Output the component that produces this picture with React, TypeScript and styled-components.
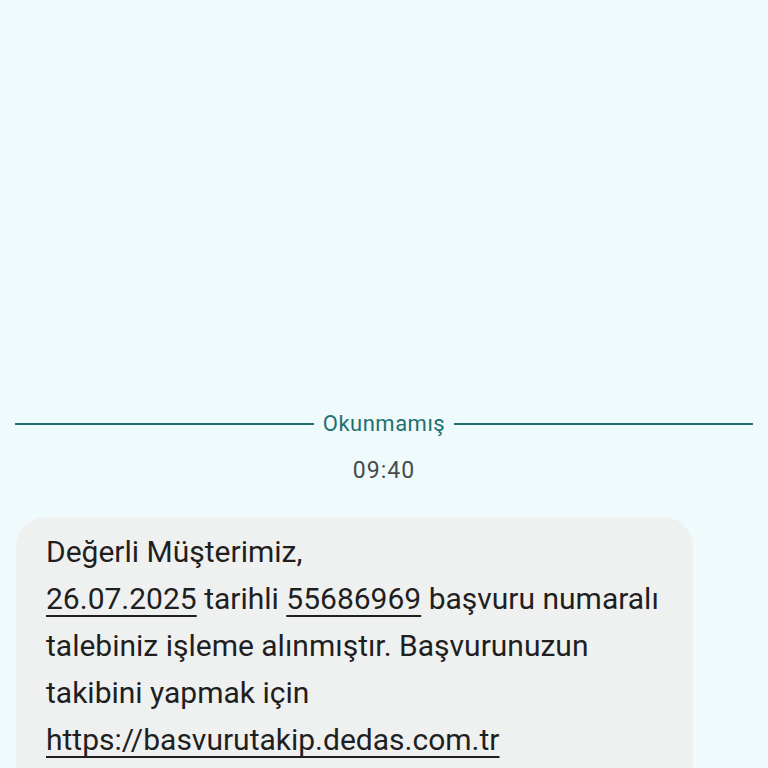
import React from 'react';
import styled, { createGlobalStyle } from 'styled-components';

const GlobalStyle = createGlobalStyle`
  html, body {
    margin: 0;
    padding: 0;
    background: #eefafb;
    height: 100%;
    overflow: hidden;
  }
`;

const Screen = styled.div`
  width: 768px;
  height: 768px;
  background: #eefafb;
  display: flex;
  flex-direction: column;
  padding-top: 411px;
  box-sizing: border-box;
  font-family: Roboto, "Noto Sans", sans-serif;
  overflow: hidden;
`;

const Divider = styled.div`
  display: flex;
  align-items: center;
  gap: 9px;
  padding: 0 15px;
  height: 30px;
`;

const Line = styled.div`
  flex: 1;
  height: 2px;
  background: #1f7070;
`;

const DividerLabel = styled.span`
  color: #1f7070;
  font-size: 22px;
  letter-spacing: 0.5px;
`;

const Time = styled.div`
  text-align: center;
  color: #474c4c;
  font-size: 23px;
  letter-spacing: 1px;
  margin-top: 20px;
  height: 30px;
  line-height: 30px;
`;

const Bubble = styled.div`
  margin: 31px 0 0 16px;
  width: 677px;
  background: #eff1f1;
  border-radius: 30px 30px 0 0;
  padding: 11px 30px 40px 30px;
  box-sizing: border-box;
  color: #1f1f1f;
  font-size: 30px;
  line-height: 47px;
  white-space: nowrap;
`;

const Link = styled.span`
  text-decoration: underline;
  text-decoration-thickness: 2px;
  text-underline-offset: 6px;
  text-decoration-skip-ink: none;
`;

export default function App() {
  return (
    <Screen>
      <GlobalStyle />
      <Divider>
        <Line />
        <DividerLabel>Okunmamış</DividerLabel>
        <Line />
      </Divider>
      <Time>09:40</Time>
      <Bubble>
        Değerli Müşterimiz,
        <br />
        <Link>26.07.2025</Link> tarihli <Link>55686969</Link> başvuru numaralı
        <br />
        talebiniz işleme alınmıştır. Başvurunuzun
        <br />
        takibini yapmak için
        <br />
        <Link>https://basvurutakip.dedas.com.tr</Link>
      </Bubble>
    </Screen>
  );
}
